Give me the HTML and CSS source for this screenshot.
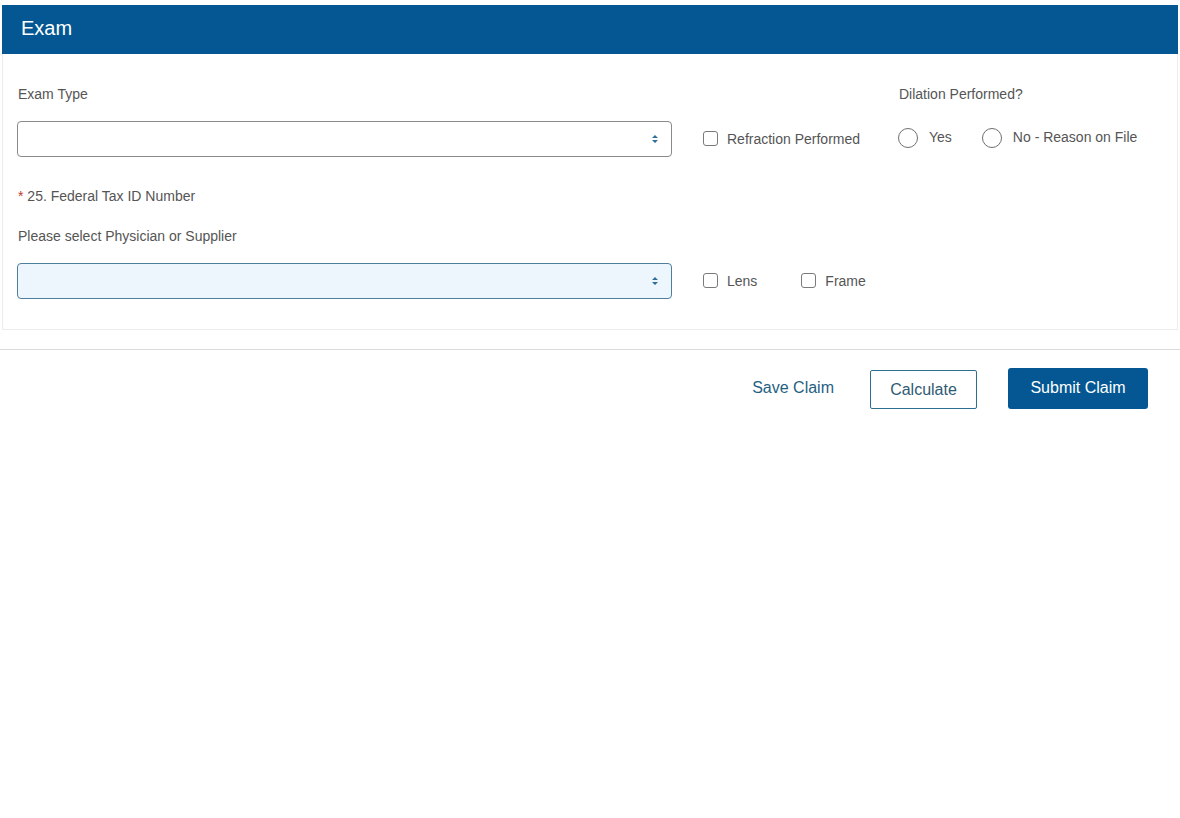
FILE: index.html
```html
<!DOCTYPE html>
<html lang="en">
<head>
<meta charset="utf-8">
<title>Exam</title>
<link rel="stylesheet" href="styles.css">
</head>
<body>
<section class="card">
  <header class="card-head">Exam</header>
  <div class="card-body">
    <div class="grid">
      <div class="label">Exam Type</div>
      <div></div>
      <div class="label">Dilation Performed?</div>

      <div class="select"><svg width="8" height="10" viewBox="0 0 8 10"><path d="M4 1 L7 4 H1 Z M4 9 L7 6 H1 Z" fill="#2f6e96"/></svg></div>
      <div class="opts">
        <label class="check up"><span class="box"></span>Refraction Performed</label>
      </div>
      <div class="opts">
        <label class="radio"><span class="circle"></span>Yes</label>
        <label class="radio no"><span class="circle"></span>No - Reason on File</label>
      </div>
    </div>

    <div class="label tax"><span class="req">*</span> 25. Federal Tax ID Number</div>
    <div class="label phys">Please select Physician or Supplier</div>

    <div class="grid">
      <div class="select active"><svg width="8" height="10" viewBox="0 0 8 10"><path d="M4 1 L7 4 H1 Z M4 9 L7 6 H1 Z" fill="#2f6e96"/></svg></div>
      <div class="opts">
        <label class="check lens up"><span class="box"></span>Lens</label>
        <label class="check up"><span class="box"></span>Frame</label>
      </div>
      <div></div>
    </div>
  </div>
</section>
<div class="divider"></div>
<div class="actions">
  <button class="btn link">Save Claim</button>
  <button class="btn outline">Calculate</button>
  <button class="btn primary">Submit Claim</button>
</div>
</body>
</html>
```
FILE: styles.css
```css
* { box-sizing: border-box; }
html, body { margin: 0; padding: 0; background: #fff; }
body {
  font-family: "Liberation Sans", Arial, sans-serif;
  color: #555;
  font-size: 14px;
}
.card {
  margin: 5px 2px 0 2px;
  border: 1px solid #ececec;
  border-top: none;
  background: #fff;
}
.card-head {
  background: #045792;
  color: #fff;
  height: 49px;
  line-height: 46px;
  font-size: 20px;
  padding-left: 19px;
  margin: 0 -1px;
}
.card-body {
  padding: 30px 14px 30px 14px;
}
.grid {
  display: grid;
  grid-template-columns: 655px 226px 1fr;
  row-gap: 17px;
}
.label {
  line-height: 20px;
  font-size: 14px;
  color: #555;
  padding-left: 1px;
}
.tax { margin-top: 29px; }
.phys { margin-top: 20px; margin-bottom: 17px; }
.req { color: #c0392b; }
.select {
  height: 36px;
  border: 1px solid #8a8a8a;
  border-radius: 4px;
  display: flex;
  align-items: center;
  justify-content: flex-end;
  padding-right: 12px;
  background: #fff;
}
.select.active {
  background: #eef6fd;
  border-color: #4d7f9c;
}
.opts {
  display: flex;
  align-items: center;
  padding-left: 31px;
}
.grid > .opts:nth-child(6) { padding-left: 0; }
.check, .radio {
  display: flex;
  align-items: center;
  color: #555;
  font-size: 14px;
}
.check.up { margin-top: -1px; }
.box {
  width: 15px;
  height: 15px;
  border: 1px solid #7a7a7a;
  border-radius: 3px;
  margin-right: 9px;
  display: inline-block;
}
.lens { margin-right: 44px; }
.circle {
  width: 20px;
  height: 20px;
  border: 1px solid #6f6f6f;
  border-radius: 50%;
  margin-right: 11px;
  display: inline-block;
  margin-top: 1px;
}
.radio { margin-top: -4px; }
.radio.no { margin-left: 30px; }
.divider {
  margin-top: 19px;
  border-top: 1px solid #dcdcdc;
  height: 0;
}
.actions {
  display: flex;
  justify-content: flex-end;
  align-items: center;
  padding-right: 32px;
  margin-top: 18px;
}
.btn {
  font-family: "Liberation Sans", Arial, sans-serif;
  font-size: 16px;
  cursor: pointer;
}
.link {
  background: none;
  border: none;
  color: #1f5f82;
  padding: 0;
  margin-right: 36px;
  margin-top: -2px;
}
.outline {
  background: #fff;
  border: 1px solid #2d6f90;
  color: #2f5a74;
  height: 39px;
  width: 107px;
  border-radius: 2px;
  margin-right: 31px;
  margin-top: 2px;
}
.primary {
  background: #045792;
  color: #fff;
  border: none;
  height: 41px;
  width: 140px;
  border-radius: 3px;
  padding-bottom: 2px;
}
```
